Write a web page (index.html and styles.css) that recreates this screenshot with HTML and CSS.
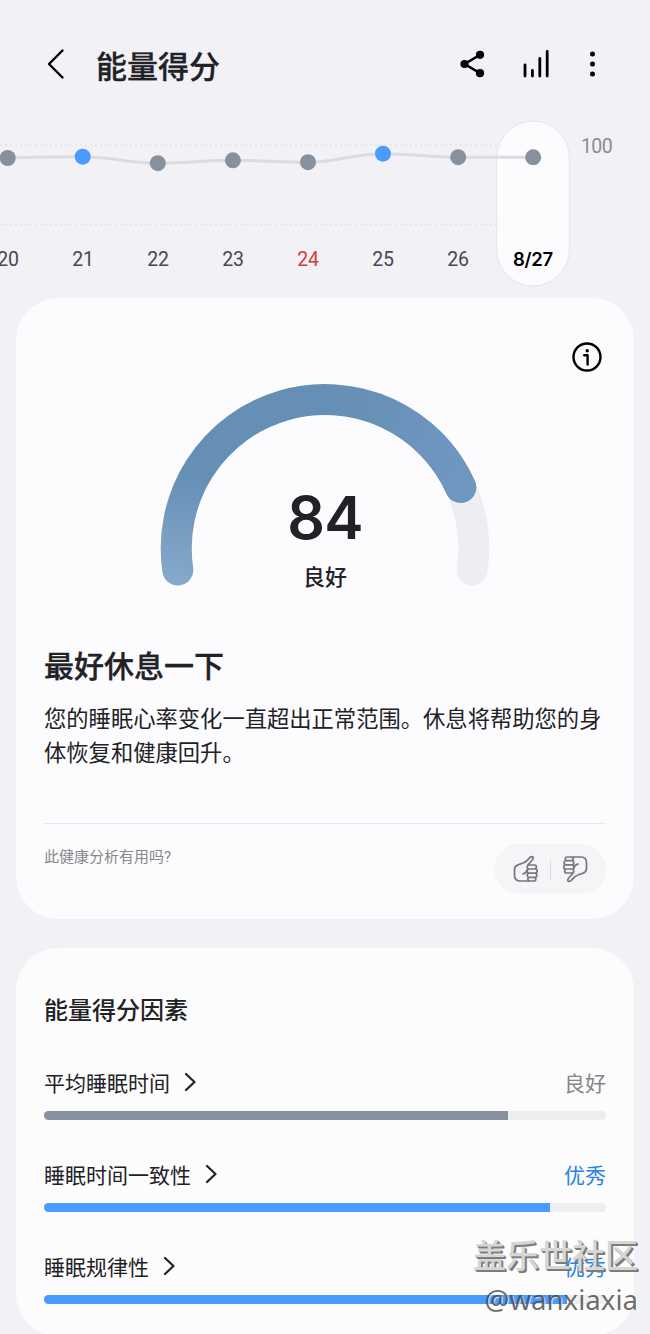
FILE: index.html
```html
<!DOCTYPE html>
<html lang="zh-CN">
<head>
<meta charset="UTF-8">
<meta name="viewport" content="width=device-width, initial-scale=1.0">
<title>能量得分</title>
<link rel="stylesheet" href="styles.css">
</head>
<body>
<div class="page">
  <header class="topbar">
    <svg class="back" width="18" height="32" viewBox="0 0 18 32"><path d="M15.500 2.500 L2 16 L15.500 29.500"/></svg>
    <h1>能量得分</h1>
    <div class="actions">
      <svg class="share" width="26" height="28" viewBox="0 0 26 28">
        <path d="M20 4.800 L4.500 14 L20 23.200"/>
        <circle cx="20" cy="4.800" r="4.100"/><circle cx="4.500" cy="14" r="4.100"/><circle cx="20" cy="23.200" r="4.100"/>
      </svg>
      <svg class="bars" width="28" height="30" viewBox="0 0 28 30"><path d="M2 16 V27 M9.400 21.500 V27 M16.800 9.500 V27 M24.200 2.500 V27"/></svg>
      <svg class="more" width="8" height="28" viewBox="0 0 8 28">
        <circle cx="3.500" cy="4" r="2.500"/><circle cx="3.500" cy="14" r="2.500"/><circle cx="3.500" cy="24" r="2.500"/>
      </svg>
    </div>
  </header>

  <section class="history">
    <svg class="chart" width="650" height="178" viewBox="0 120 650 178">
      <path class="guide" d="M0 145 H497 M0 224.500 H497"/>
      <rect class="selected" x="496.800" y="121" width="72.500" height="165" rx="36.200"/>
      <path class="line" d="M7.700 158 C35 156.800 55 156.700 82.700 156.700 C110 156.700 130 163.200 157.700 163.200 S205 160.300 232.800 160.300 S280 162.200 308 162.200 S355 153.800 383 153.800 S430 157.300 458 157.300 H533"/>
      <g class="dots">
        <circle cx="7.700" cy="158" r="8"/>
        <circle class="blue" cx="82.700" cy="156.700" r="8"/>
        <circle cx="157.800" cy="163.200" r="8"/>
        <circle cx="232.900" cy="160.300" r="8"/>
        <circle cx="308" cy="162.200" r="8"/>
        <circle class="blue" cx="383" cy="153.700" r="8"/>
        <circle cx="458.200" cy="157.200" r="8"/>
        <circle cx="533.200" cy="157.300" r="8"/>
      </g>
    </svg>
    <div class="days">
      <span>20</span><span>21</span><span>22</span><span>23</span>
      <span class="sunday">24</span><span>25</span><span>26</span><span class="today">8/27</span>
    </div>
    <span class="max">100</span>
  </section>

  <section class="card score">
    <svg class="info" width="32" height="32" viewBox="0 0 32 32">
      <circle cx="16" cy="16" r="13.500"/>
      <path d="M13.200 14.300 H16.600 V23.500"/>
      <circle class="dot" cx="16.200" cy="9.700" r="1.700"/>
    </svg>
    <div class="gauge">
      <svg width="330" height="204" viewBox="160 383 330 204">
        <defs>
          <linearGradient id="arc" gradientUnits="userSpaceOnUse" x1="180" y1="585" x2="205" y2="475">
            <stop offset="0" stop-color="#86a9cb"/>
            <stop offset="1" stop-color="#658fb5"/>
          </linearGradient>
          <linearGradient id="arcEnd" gradientUnits="userSpaceOnUse" x1="325" y1="400" x2="450" y2="470">
            <stop offset="0" stop-color="#6f96bf" stop-opacity="0"/>
            <stop offset="1" stop-color="#6f96bf"/>
          </linearGradient>
        </defs>
        <path class="track" d="M177.800 570 A148.800 148.800 0 1 1 472.200 570"/>
        <path class="value" stroke="url(#arc)" d="M177.800 570 A148.800 148.800 0 0 1 460.700 487.300"/>
        <path class="value" stroke="url(#arcEnd)" d="M325 399.300 A148.800 148.800 0 0 1 460.700 487.300"/>
      </svg>
      <div class="result">
        <strong>84</strong>
        <span>良好</span>
      </div>
    </div>
    <h2>最好休息一下</h2>
    <p class="advice">您的睡眠心率变化一直超出正常范围。休息将帮助您的身体恢复和健康回升。</p>
    <div class="feedback">
      <span>此健康分析有用吗?</span>
      <div class="votes">
        <svg width="26" height="28" viewBox="0 0 26 28">
          <path d="M15 9.800 L19.300 5 C21.500 2 19.500 .8 17 2.300 C14 5.200 13.500 7.200 9.500 8.300 L4.800 9.900 C2.700 10.700 1.500 12 1.500 14.500 V20 C1.500 24 3.500 26 7 26 H15.500"/>
          <path d="M10 18.800 C12.500 18.400 13.600 17.200 14 15"/>
          <path d="M16.500 10 H21.500 C24 10 24 14 21.500 14 H16 C13.500 14 13.500 10 16.500 10 M16 14 H22 C25 14 25 18.200 22 18.200 H16 C13.700 18.200 13.700 14 16 14 M16 18.200 H21.800 C24.500 18.200 24.500 22.300 21.800 22.300 H16 C13.700 22.300 13.700 18.200 16 18.200 M16.500 22.300 H21 C23.300 22.300 23.300 26 21 26 H16.500 C14.300 26 14.300 22.300 16.500 22.300"/>
        </svg>
        <i></i>
        <svg class="down" width="26" height="28" viewBox="0 0 26 28">
          <path d="M15 9.800 L19.300 5 C21.500 2 19.500 .8 17 2.300 C14 5.200 13.500 7.200 9.500 8.300 L4.800 9.900 C2.700 10.700 1.500 12 1.500 14.500 V20 C1.500 24 3.500 26 7 26 H15.500"/>
          <path d="M10 18.800 C12.500 18.400 13.600 17.200 14 15"/>
          <path d="M16.500 10 H21.500 C24 10 24 14 21.500 14 H16 C13.500 14 13.500 10 16.500 10 M16 14 H22 C25 14 25 18.200 22 18.200 H16 C13.700 18.200 13.700 14 16 14 M16 18.200 H21.800 C24.500 18.200 24.500 22.300 21.800 22.300 H16 C13.700 22.300 13.700 18.200 16 18.200 M16.500 22.300 H21 C23.300 22.300 23.300 26 21 26 H16.500 C14.300 26 14.300 22.300 16.500 22.300"/>
        </svg>
      </div>
    </div>
  </section>

  <section class="card factors">
    <h3>能量得分因素</h3>
    <div class="factor">
      <div class="label">
        <span>平均睡眠时间</span>
        <svg width="12" height="20" viewBox="0 0 12 20"><path d="M2 2 L10.500 10 L2 18"/></svg>
        <em>良好</em>
      </div>
      <div class="bar"><div class="fill" style="width: 82.500%"></div></div>
    </div>
    <div class="factor great">
      <div class="label">
        <span>睡眠时间一致性</span>
        <svg width="12" height="20" viewBox="0 0 12 20"><path d="M2 2 L10.500 10 L2 18"/></svg>
        <em>优秀</em>
      </div>
      <div class="bar"><div class="fill" style="width: 90.100%"></div></div>
    </div>
    <div class="factor great">
      <div class="label">
        <span>睡眠规律性</span>
        <svg width="12" height="20" viewBox="0 0 12 20"><path d="M2 2 L10.500 10 L2 18"/></svg>
        <em>优秀</em>
      </div>
      <div class="bar"><div class="fill" style="width: 93%"></div></div>
    </div>
  </section>

  <div class="watermark">
    <span class="site">盖乐世社区</span>
    <span class="user">@wanxiaxia</span>
  </div>
</div>
</body>
</html>
```
FILE: styles.css
```css
* {box-sizing: border-box;}
body {
  margin: 0;
  background-color: #f1f1f6;
  color: #222226;
  font-family: Roboto, "Noto Sans CJK SC", sans-serif;
}
h1, h2, h3, p {margin: 0;}
svg {display: block; fill: none; stroke-linecap: round; stroke-linejoin: round;}

.page {
  position: relative;
  width: 650px;
  height: 1334px;
  overflow: hidden;
}

/* top bar */
.topbar {
  display: flex;
  align-items: center;
  height: 120px;
  padding: 15px 53px 0 47px;
}
.topbar h1 {
  margin-left: 31px;
  font-size: 31px;
  font-weight: 500;
  line-height: 40px;
  -webkit-text-stroke: 0.3px;
}
.back {margin-bottom: 8px; stroke: #000; stroke-width: 2.4;}
.actions {
  display: flex;
  align-items: center;
  margin: 0 0 8px auto;
}
.share {fill: #000; stroke: none;}
.share path {fill: none; stroke: #000; stroke-width: 2.6;}
.bars {margin-left: 37px; stroke: #000; stroke-width: 2.8;}
.more {margin-left: 38px; fill: #000;}

/* score history */
.history {
  display: grid;
  grid-template-columns: 571px 79px;
  height: 178px;
}
.chart {grid-area: 1 / 1 / 2 / 3;}
.guide {stroke: #e4e4e9; stroke-width: 1.5; stroke-linecap: butt; stroke-dasharray: 2 3;}
.selected {fill: #fcfcff; stroke: #e6e6ea; stroke-width: 1;}
.line {stroke: #dcdce0; stroke-width: 3;}
.dots {fill: #87919d;}
.dots .blue {fill: #4a9bff;}
.days {
  grid-area: 1 / 1;
  display: grid;
  grid-template-columns: repeat(8, 75px);
  margin-left: -29.5px;
  padding-top: 128px;
  font-size: 19.5px;
  line-height: 24px;
  text-align: center;
  letter-spacing: -0.3px;
  color: #48484e;
}
.sunday {color: #d83b3b;}
.today {
  color: #000;
  font-family: Inter, sans-serif;
  font-size: 18.5px;
  font-weight: 600;
  line-height: 22px;
}
.max {
  grid-area: 1 / 2;
  padding: 15px 0 0 10px;
  font-size: 19.5px;
  line-height: 24px;
  letter-spacing: -0.6px;
  color: #8b8b91;
}

/* cards */
.card {
  margin: 0 16px;
  padding: 0 28px;
  border-radius: 42px;
  background-color: #fcfcff;
}
.score {
  display: flex;
  flex-direction: column;
  height: 621px;
}
.info {
  align-self: flex-end;
  margin: 43px 3px 0 0;
  stroke: #000;
  stroke-width: 2.4;
}
.info .dot {fill: #000; stroke: none;}
.gauge {
  display: grid;
  justify-content: center;
  height: 204px;
  margin-top: 10px;
}
.gauge svg, .result {grid-area: 1 / 1;}
.track {stroke: #eeeef2; stroke-width: 31;}
.value {stroke-width: 31;}
.result {
  display: flex;
  flex-direction: column;
  align-items: center;
  padding-top: 99px;
}
.result strong {
  font: 600 59px/72px Inter, sans-serif;
  letter-spacing: -0.8px;
}
.result span {
  margin-top: 9px;
  font-size: 22px;
  font-weight: 500;
  line-height: 30px;
}
.score h2 {
  margin-top: 58px;
  font-size: 30px;
  font-weight: 500;
  line-height: 44px;
  -webkit-text-stroke: 0.3px;
}
.advice {
  margin-top: 13px;
  font-size: 22.3px;
  font-weight: 400;
  line-height: 34px;
}
.feedback {
  display: flex;
  justify-content: space-between;
  margin-top: 53px;
  padding-top: 20px;
  border-top: 1px solid #e9e9ed;
  font-size: 15px;
  line-height: 26px;
  color: #86868b;
}
.votes {
  display: flex;
  align-items: center;
  justify-content: center;
  gap: 11px;
  width: 112px;
  height: 50px;
  border-radius: 25px;
  background-color: #f5f5f8;
}
.votes svg {stroke: #77777c; stroke-width: 1.7;}
.votes .down {transform: rotate(180deg);}
.votes i {width: 1px; height: 19px; background-color: #d9d9de;}

.factors {
  height: 388px;
  margin-top: 29px;
  padding-top: 46px;
  background-color: #fcfcfd;
}
.factors h3 {
  font-size: 24px;
  font-weight: 500;
  line-height: 34px;
}
.factor {height: 92px;}
.factors h3 + .factor {margin-top: 38px;}
.label {
  display: flex;
  align-items: center;
  height: 32px;
  font-size: 21px;
}
.label svg {margin-left: 14px; stroke: #222226; stroke-width: 2.2;}
.label em {
  margin-left: auto;
  font-style: normal;
  color: #85858a;
}
.great em {color: #2783e6;}
.bar {
  height: 9.5px;
  margin-top: 12.6px;
  border-radius: 5px;
  overflow: hidden;
  background-color: #eeeef0;
}
.fill {height: 100%; background-color: #87919d;}
.great .fill {background-color: #4a9bff;}

/* forum stamp over the corner */
.watermark {
  position: absolute;
  right: 12px;
  bottom: 15px;
  display: flex;
  flex-direction: column;
  align-items: flex-end;
}
.site {
  font-size: 33px;
  font-weight: 500;
  line-height: 44px;
  color: #d6d6d6;
  text-shadow: 1px 1px #808080, 2px 2px #7a7a7a;
}
.user {
  font: 27.6px/40px "Noto Sans", sans-serif;
  color: rgba(60, 60, 60, 0.75);
  text-shadow: 1px 1px rgba(255, 255, 255, 0.7);
}
```
